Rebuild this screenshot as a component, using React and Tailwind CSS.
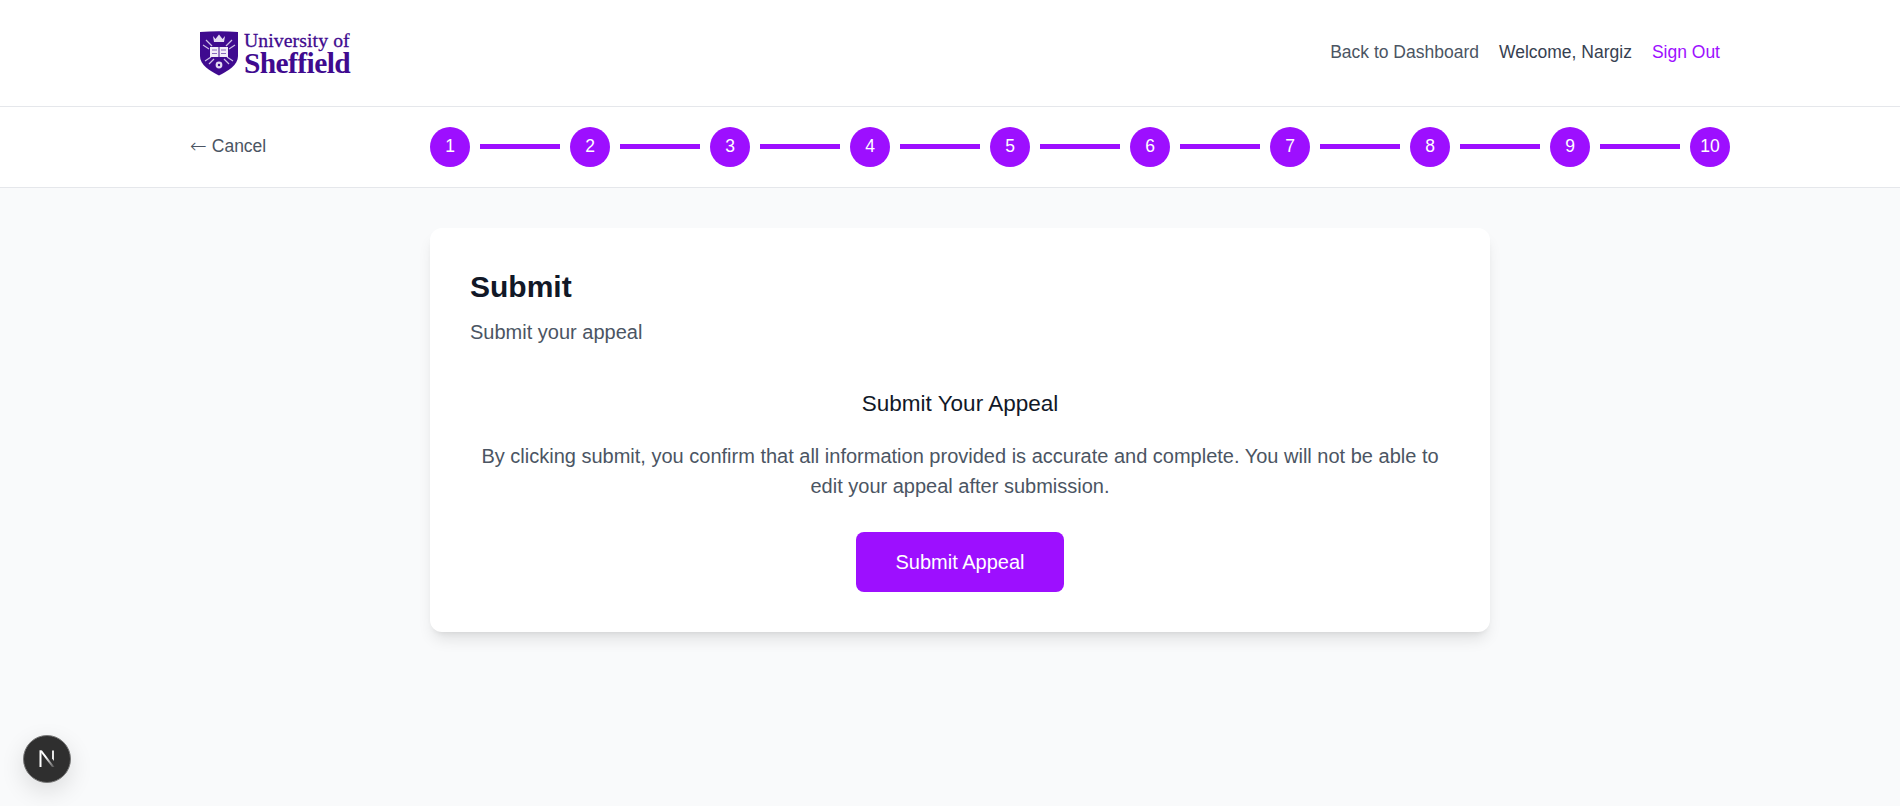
const steps = [1, 2, 3, 4, 5, 6, 7, 8, 9, 10];

function Shield() {
  return (
    <svg width="38" height="45" viewBox="0 0 38 45" className="shrink-0">
      <path d="M0 1 Q19 -0.5 38 1 V25 C38 34 28 40 19 44.5 C10 40 0 34 0 25 Z" fill="#3f0a8f" />
      <path d="M13 5 L15.5 8 L19 3.5 L22.5 8 L25 5 L24 11 H14 Z" fill="#e4dcf2" />
      <g stroke="#cfc2e6" strokeWidth="1.2">
        <path d="M6 9 L12 15" />
        <path d="M32 9 L26 15" />
        <path d="M3 14 L9 18" />
        <path d="M35 14 L29 18" />
        <path d="M5 30 L11 26" />
        <path d="M33 30 L27 26" />
        <path d="M9 33 L14 28" />
        <path d="M29 33 L24 28" />
      </g>
      <rect x="10" y="16" width="18" height="10" fill="#f1edf8" />
      <path d="M19 16 V26" stroke="#3f0a8f" strokeWidth="1" />
      <path d="M12 19 H17 M21 19 H26 M12 22.5 H17 M21 22.5 H26" stroke="#8a6bbd" strokeWidth="1" />
      <circle cx="19" cy="34" r="3.4" fill="#e4dcf2" />
      <circle cx="19" cy="34" r="1.2" fill="#3f0a8f" />
    </svg>
  );
}

function Logo() {
  return (
    <div className="flex items-center gap-1.5">
      <Shield />
      <div className="flex flex-col font-['Liberation_Serif',serif] text-[#3f0a8f]">
        <span className="text-[19.7px] leading-[20px] tracking-[0.1px] [-webkit-text-stroke:0.3px_#3f0a8f]">University of</span>
        <span className="text-[29.5px] leading-[26px] font-bold tracking-[-0.6px]">Sheffield</span>
      </div>
    </div>
  );
}

export default function App() {
  return (
    <div className="min-h-[806px] bg-[#f9fafb] font-['Liberation_Sans',Arial,sans-serif]">
      <header className="flex h-[107px] items-center justify-between border-b border-[#e5e7eb] bg-white pl-[200px] pr-[180px]">
        <Logo />
        <nav className="mb-0.5 flex items-center gap-5 text-[17.5px] text-[#374151]">
          <a className="text-[#4b5563]">Back to Dashboard</a>
          <span>Welcome, Nargiz</span>
          <a className="text-[#9d0fff]">Sign Out</a>
        </nav>
      </header>

      <div className="flex h-[81px] items-center border-b border-[#e5e7eb] bg-white pl-[190px]">
        <a className="mb-0.5 flex w-[240px] items-center gap-[5px] text-[17.5px] text-[#4b5563]">
          <span className="font-['DejaVu_Sans',sans-serif] text-[20px] leading-none font-light">←</span>
          <span>Cancel</span>
        </a>
        <div className="flex items-center gap-2.5">
          {steps.map((n) => (
            <div key={n} className="flex items-center gap-2.5">
              <div className="flex size-10 items-center justify-center rounded-full bg-[#9d0fff] pb-px text-[17.5px] text-white">{n}</div>
              {n < 10 && <div className="mb-px h-[5px] w-20 bg-[#9d0fff]" />}
            </div>
          ))}
        </div>
      </div>

      <main className="pl-[430px] pt-10">
        <section className="w-[1060px] rounded-xl bg-white p-10 shadow-lg">
          <h1 className="text-[30px] leading-[38px] font-bold text-[#111827]">Submit</h1>
          <p className="mt-[11px] text-[20px] leading-[30px] text-[#4b5563]">Submit your appeal</p>
          <div className="mt-[43px] flex flex-col items-center text-center">
            <h2 className="text-[22.5px] leading-7 text-[#111827]">Submit Your Appeal</h2>
            <p className="mt-[23px] text-[20px] leading-[30px] text-[#4b5563]">
              By clicking submit, you confirm that all information provided is accurate and complete. You will not be able to edit your appeal after submission.
            </p>
            <button className="mt-[31px] h-[60px] w-[208px] rounded-lg bg-[#9d0fff] text-[20px] text-white">Submit Appeal</button>
          </div>
        </section>
      </main>

      <div className="fixed bottom-[23px] left-[23px] flex size-12 items-center justify-center rounded-full border border-[#777] bg-[#2f2f2f] shadow-[0_8px_24px_rgba(0,0,0,0.12)]">
        <svg width="18" height="18" viewBox="0 0 18 18">
          <defs>
            <linearGradient id="nfade" x1="0" y1="0" x2="1" y2="1">
              <stop offset="0.4" stopColor="#fff" />
              <stop offset="1" stopColor="#fff" stopOpacity="0.15" />
            </linearGradient>
          </defs>
          <path d="M1.5 0.5 H3.5 V17 H1.5 Z" fill="#fff" />
          <path d="M1.5 0.5 H4 L16.5 17 H14 Z" fill="url(#nfade)" />
          <path d="M14 0.5 H16 V11 L14 8.5 Z" fill="#e5e5e5" />
        </svg>
      </div>
    </div>
  );
}
